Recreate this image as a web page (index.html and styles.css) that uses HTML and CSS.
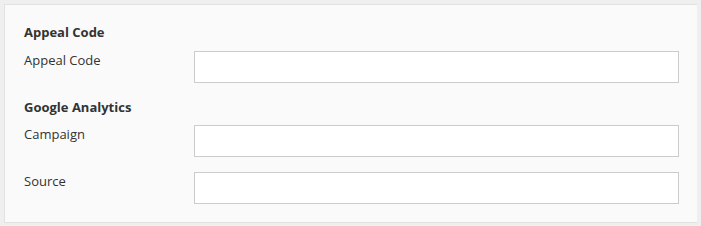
FILE: index.html
```html
<!DOCTYPE html>
<html lang="en">
<head>
  <title>Tracking</title>
  <link rel="stylesheet" href="styles.css">
</head>
<body>
  <div class="panel">
    <h3 class="group-title">Appeal Code</h3>
    <div class="field">
      <label for="appeal">Appeal Code</label>
      <input type="text" id="appeal">
    </div>

    <h3 class="group-title">Google Analytics</h3>
    <div class="field">
      <label for="campaign">Campaign</label>
      <input type="text" id="campaign">
    </div>
    <div class="field">
      <label for="source">Source</label>
      <input type="text" id="source">
    </div>
  </div>
</body>
</html>
```

FILE: styles.css
```css
body {
  font-family: "Open Sans", Arial, sans-serif;
  font-size: 13px;
  background-color: #efefef;
  margin: 4px;
  color: #333;
}

.panel {
  box-sizing: border-box;
  width: 694px;
  background-color: #fafafa;
  border: 1px solid #e2e2e2;
  padding: 18px 18px 3px 19px;
}

.group-title {
  font-size: 13px;
  font-weight: bold;
  line-height: 18px;
  margin: 0 0 10px;
}

.field + .group-title {
  margin-bottom: 9px;
}

.field {
  display: flex;
  align-items: flex-start;
  margin-bottom: 15px;
}

.field label {
  width: 170px;
  flex-shrink: 0;
  line-height: 18px;
}

.field input {
  flex: 1;
  box-sizing: border-box;
  height: 32px;
  margin: 0;
  border: 1px solid #ccc;
  background-color: #fff;
  font-family: inherit;
  font-size: 13px;
  padding: 4px 8px;
}
```
